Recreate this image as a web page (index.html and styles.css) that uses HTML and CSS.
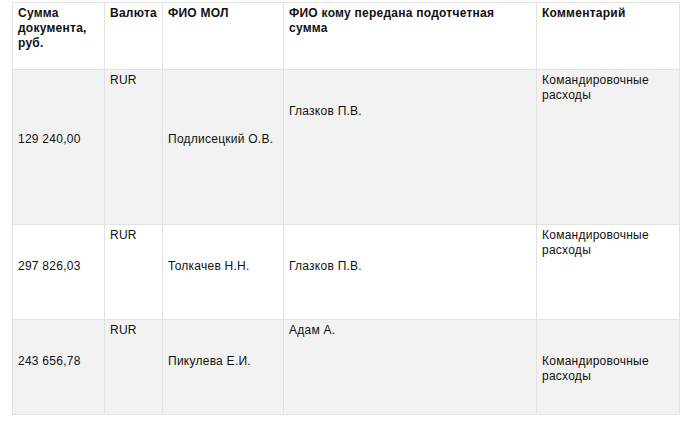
FILE: index.html
```html
<!DOCTYPE html>
<html lang="ru">
<head>
<meta charset="utf-8">
<title>Таблица</title>
<link rel="stylesheet" href="styles.css">
</head>
<body>
<div class="table">
  <div class="cell head">Сумма документа, руб.</div>
  <div class="cell head">Валюта</div>
  <div class="cell head">ФИО МОЛ</div>
  <div class="cell head">ФИО кому передана подотчетная сумма</div>
  <div class="cell head">Комментарий</div>

  <div class="cell alt low">129 240,00</div>
  <div class="cell alt">RUR</div>
  <div class="cell alt low">Подлисецкий О.В.</div>
  <div class="cell alt mid">Глазков П.В.</div>
  <div class="cell alt">Командировочные расходы</div>

  <div class="cell mid">297 826,03</div>
  <div class="cell">RUR</div>
  <div class="cell mid">Толкачев Н.Н.</div>
  <div class="cell mid">Глазков П.В.</div>
  <div class="cell">Командировочные расходы</div>

  <div class="cell alt mid">243 656,78</div>
  <div class="cell alt">RUR</div>
  <div class="cell alt mid">Пикулева Е.И.</div>
  <div class="cell alt">Адам А.</div>
  <div class="cell alt mid">Командировочные расходы</div>
</div>
</body>
</html>
```

FILE: styles.css
```css
html, body {
  margin: 0;
  background: #ffffff;
}
body {
  padding: 2px 12px;
  font-family: "Liberation Sans", Arial, sans-serif;
  font-size: 12px;
  line-height: 15px;
  letter-spacing: 0.25px;
  color: #111111;
}
.table {
  display: grid;
  grid-template-columns: 91px 57px 120px 252px 142px;
  grid-template-rows: 66px 154px 94px 94px;
  gap: 1px;
  padding: 1px;
  width: max-content;
  background: #e2e2e2;
}
.cell {
  background: #ffffff;
  padding: 3px 5px 0 5px;
}
.cell.alt {
  background: #f2f2f2;
}
.cell.head {
  font-weight: bold;
}
.cell.mid {
  padding-top: 34px;
}
.cell.low {
  padding-top: 62px;
}
```
